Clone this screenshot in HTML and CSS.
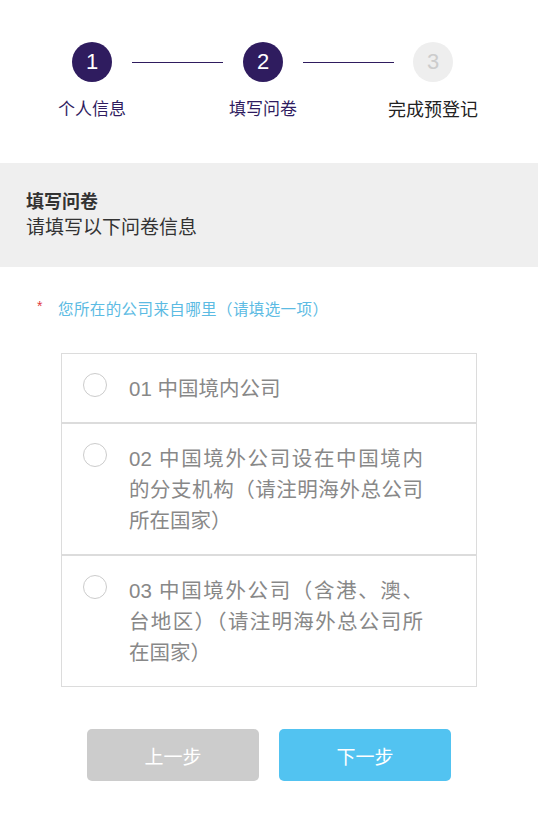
FILE: index.html
```html
<!DOCTYPE html>
<html lang="zh-CN">
<head>
  <meta charset="UTF-8">
  <title>填写问卷</title>
  <meta name="viewport" content="width=device-width, initial-scale=1.0">
  <link rel="stylesheet" href="styles.css">
</head>
<body>
  <div class="steps">
    <div class="step-circle done">1</div>
    <div class="step-line line-a"></div>
    <div class="step-circle done">2</div>
    <div class="step-line line-b"></div>
    <div class="step-circle todo">3</div>
    <div class="step-label done col-1">个人信息</div>
    <div class="step-label done col-3">填写问卷</div>
    <div class="step-label col-5">完成预登记</div>
  </div>

  <div class="section-head">
    <div class="section-title">填写问卷</div>
    <div class="section-sub">请填写以下问卷信息</div>
  </div>

  <div class="question">
    <span class="required">*</span>
    <span class="question-text">您所在的公司来自哪里（请填选一项）</span>
  </div>

  <div class="options">
    <label class="option">
      <span class="radio"></span>
      <span class="option-text"><span>01 中国境内公司</span></span>
    </label>
    <label class="option">
      <span class="radio"></span>
      <span class="option-text">
        <span>02 中国境外公司设在中国境内</span>
        <span>的分支机构（请注明海外总公司</span>
        <span>所在国家）</span>
      </span>
    </label>
    <label class="option">
      <span class="radio"></span>
      <span class="option-text">
        <span>03 中国境外公司（含港、澳、</span>
        <span>台地区）（请注明海外总公司所</span>
        <span>在国家）</span>
      </span>
    </label>
  </div>

  <div class="actions">
    <button class="btn btn-prev">上一步</button>
    <button class="btn btn-next">下一步</button>
  </div>
</body>
</html>
```

FILE: styles.css
```css
:root {
  --purple: #2f1c5f;
  --blue: #52c3f1;
  --link-blue: #5cbbe3;
  --grey-text: #888;
  --border: #dcdcdc;
}

body {
  margin: 0;
  font-family: "Liberation Sans", "Noto Sans CJK SC", sans-serif;
  color: #333;
  background: #fff;
}

/* step indicator */
.steps {
  display: grid;
  grid-template-columns: 40px 131px 40px 130px 40px;
  justify-content: center;
  padding: 42px 13px 41px 0;
}

.step-circle {
  width: 40px;
  height: 40px;
  border-radius: 50%;
  display: flex;
  align-items: center;
  justify-content: center;
  font-size: 22px;
  grid-row: 1;
}

.step-circle.done {
  background: var(--purple);
  color: #fff;
}

.step-circle.todo {
  background: #eee;
  color: #ccc;
}

.step-line {
  grid-row: 1;
  align-self: center;
  height: 1px;
  background: var(--purple);
}

.line-a {
  margin: 0 20px;
}

.line-b {
  margin: 0 19px 0 20px;
}

.step-label {
  grid-row: 2;
  justify-self: center;
  white-space: nowrap;
  margin-top: 16px;
  font-size: 17px;
  line-height: 24px;
  color: #222;
}

.step-label.done {
  color: var(--purple);
}

.col-1 { grid-column: 1; }
.col-3 { grid-column: 3; }
.col-5 { grid-column: 5; font-size: 18px; }

/* grey header band */
.section-head {
  background: #efefef;
  padding: 26px;
}

.section-title {
  font-size: 18px;
  font-weight: bold;
  line-height: 26px;
}

.section-sub {
  font-size: 19px;
  line-height: 26px;
}

/* question */
.question {
  display: flex;
  margin: 32px 0 0 37px;
  line-height: 22px;
}

.required {
  color: #e0393e;
  font-size: 14px;
  line-height: 14px;
  width: 21px;
}

.question-text {
  color: var(--link-blue);
  font-size: 15.5px;
  letter-spacing: 0.4px;
}

/* options */
.options {
  margin: 32px 61px 0;
}

.option {
  display: flex;
  gap: 22px;
  border: 1px solid var(--border);
  padding: 19px 53px 18px 21px;
}

.radio {
  flex: none;
  width: 22px;
  height: 22px;
  border: 1px solid #ccc;
  border-radius: 50%;
}

.option-text {
  flex: 1;
  font-size: 20.5px;
  line-height: 31px;
  color: var(--grey-text);
}

.option-text span {
  display: block;
  text-align: justify;
  text-align-last: justify;
}

.option-text span:last-child {
  text-align-last: auto;
}

/* buttons */
.actions {
  display: flex;
  justify-content: center;
  gap: 20px;
  margin-top: 42px;
}

.btn {
  width: 172px;
  height: 52px;
  border: none;
  border-radius: 5px;
  color: #fff;
  font-family: inherit;
  font-size: 19px;
  cursor: pointer;
}

.btn-prev {
  background: #ccc;
}

.btn-next {
  background: var(--blue);
}
```
